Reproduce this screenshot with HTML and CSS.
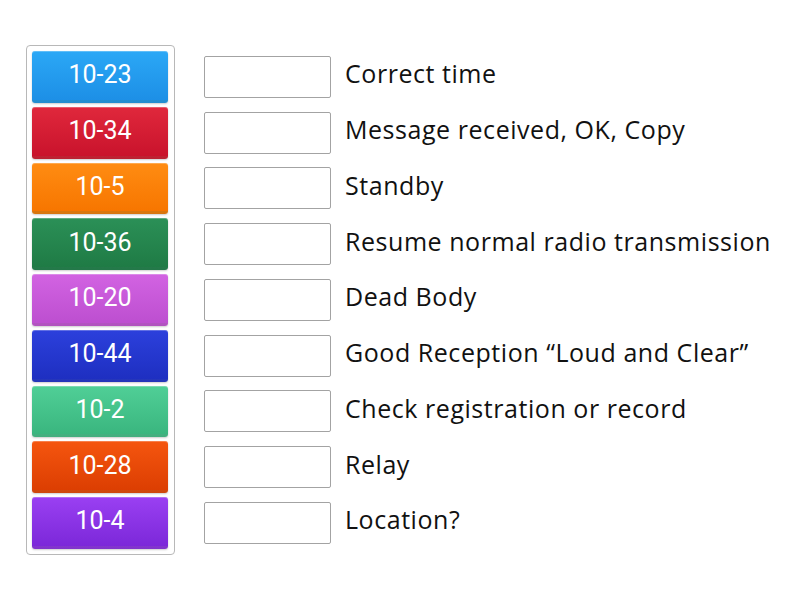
FILE: index.html
```html
<!DOCTYPE html>
<html lang="en">
<head>
    <meta charset="UTF-8">
    <title>Match up</title>
    <link rel="stylesheet" href="styles.css">
</head>
<body>
    <div class="board">
        <div class="tiles">
            <div class="tile blue">10-23</div>
            <div class="tile red">10-34</div>
            <div class="tile orange">10-5</div>
            <div class="tile green">10-36</div>
            <div class="tile pink">10-20</div>
            <div class="tile navy">10-44</div>
            <div class="tile mint">10-2</div>
            <div class="tile rust">10-28</div>
            <div class="tile purple">10-4</div>
        </div>

        <div class="rows">
            <div class="row"><div class="slot"></div><span class="label">Correct time</span></div>
            <div class="row"><div class="slot"></div><span class="label">Message received, OK, Copy</span></div>
            <div class="row"><div class="slot"></div><span class="label">Standby</span></div>
            <div class="row"><div class="slot"></div><span class="label">Resume normal radio transmission</span></div>
            <div class="row"><div class="slot"></div><span class="label">Dead Body</span></div>
            <div class="row"><div class="slot"></div><span class="label">Good Reception “Loud and Clear”</span></div>
            <div class="row"><div class="slot"></div><span class="label">Check registration or record</span></div>
            <div class="row"><div class="slot"></div><span class="label">Relay</span></div>
            <div class="row"><div class="slot"></div><span class="label">Location?</span></div>
        </div>
    </div>
</body>
</html>
```

FILE: styles.css
```css
body {
    margin: 0;
    background: white;
    font-family: "Open Sans", Lato, sans-serif;
}

.board {
    display: flex;
    align-items: flex-start;
    padding: 45px 0 0 26px;
}

.tiles {
    display: flex;
    flex-direction: column;
    gap: 4px;
    padding: 5px 6px 5px 5px;
    border: 1px solid #b8b8b8;
    border-radius: 4px;
}

.tile {
    width: 136px;
    height: 51.75px;
    box-sizing: border-box;
    display: flex;
    align-items: center;
    justify-content: center;
    border-radius: 3px;
    border-bottom: 3px solid rgba(0,0,0,0.15);
    box-shadow: inset 0 1px 0 rgba(255,255,255,0.25), 0 1px 2px rgba(0,0,0,0.2);
    color: white;
    font-family: Roboto, "Liberation Sans", sans-serif;
    font-size: 25px;
    padding-bottom: 1px;
}

.blue   { background: linear-gradient(#2ba8f6, #1d8fe6); }
.red    { background: linear-gradient(#e0283c, #c9132c); }
.orange { background: linear-gradient(#ff8c12, #f77600); }
.green  { background: linear-gradient(#2b9057, #1f7b45); }
.pink   { background: linear-gradient(#d263e2, #bd4fd0); }
.navy   { background: linear-gradient(#2c40dc, #1e2fc1); }
.mint   { background: linear-gradient(#50cf97, #3ab67f); }
.rust   { background: linear-gradient(#f5560f, #dc3e02); }
.purple { background: linear-gradient(#9a40f2, #7c28d9); }

.rows {
    display: flex;
    flex-direction: column;
    gap: 4px;
    padding: 6px 0 0 29px;
}

.row {
    display: flex;
    align-items: center;
    height: 51.75px;
}

.slot {
    width: 127px;
    height: 42px;
    box-sizing: border-box;
    border: 1px solid #a3a3a3;
    border-radius: 2px;
    flex: none;
}

.label {
    margin-left: 14px;
    padding-bottom: 7px;
    font-size: 25px;
    letter-spacing: 0.55px;
    color: #111;
    white-space: nowrap;
}
```
